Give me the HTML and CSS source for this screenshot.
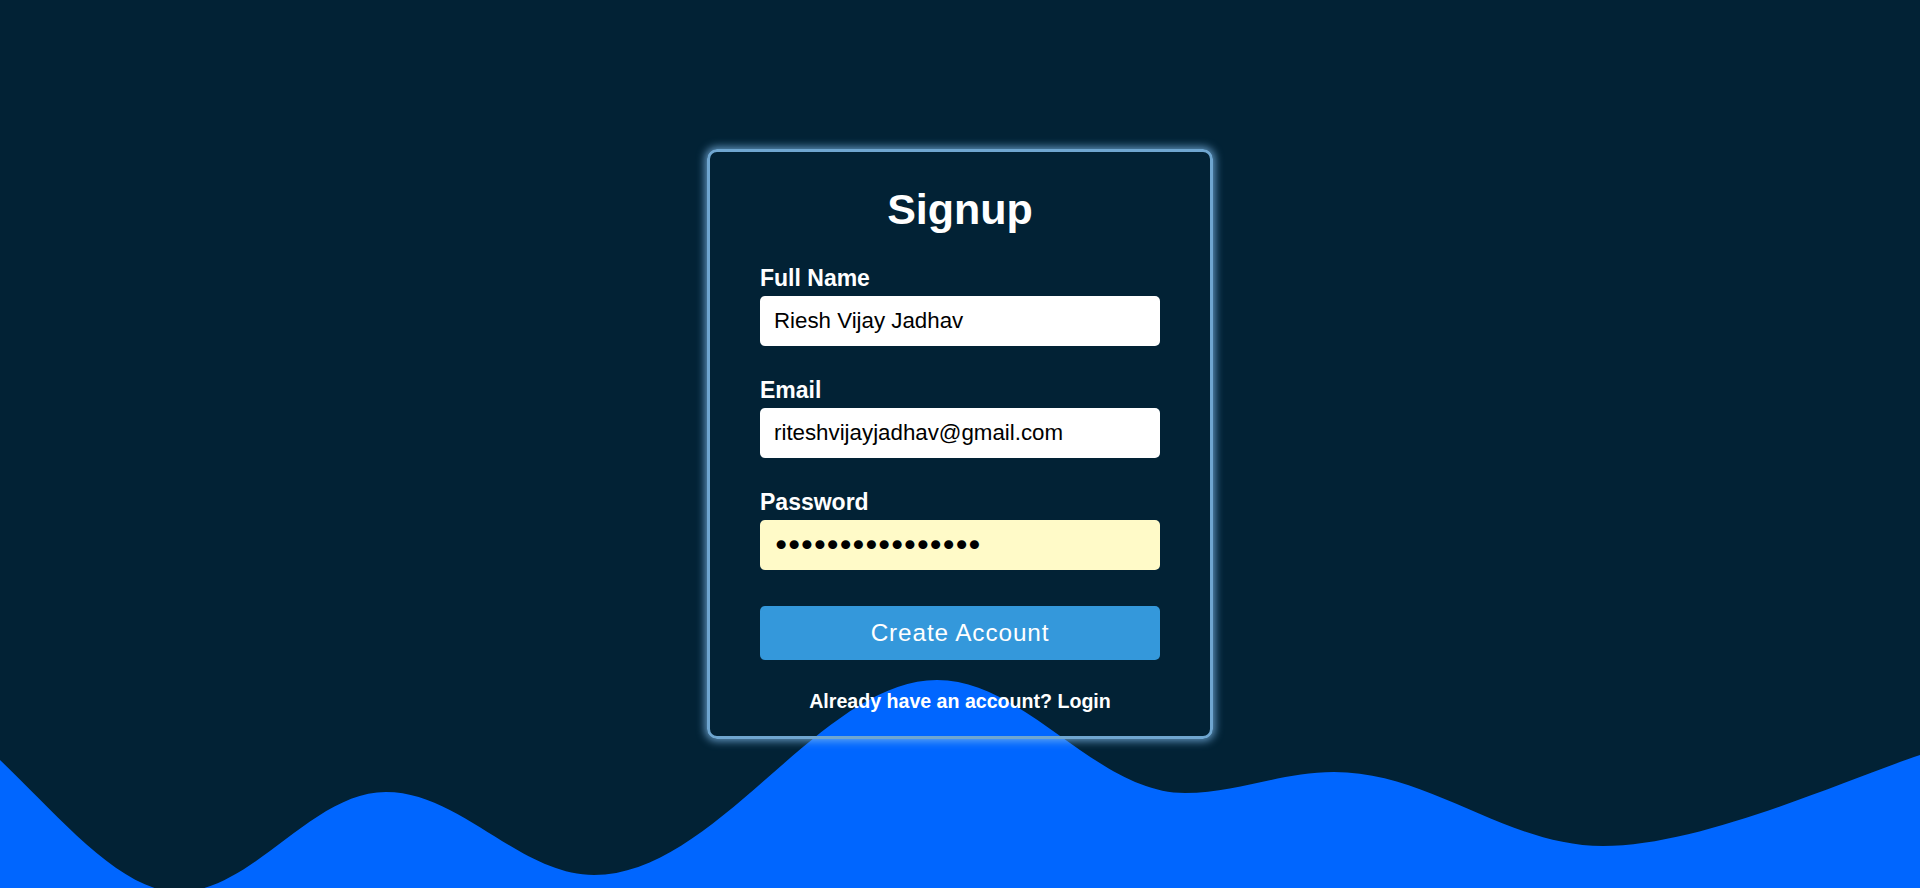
FILE: index.html
```html
<!DOCTYPE html>
<html lang="en">
<head>
<meta charset="utf-8">
<title>Signup</title>
<link rel="stylesheet" href="styles.css">
</head>
<body>
  <svg class="wave" viewBox="0 0 1920 888" preserveAspectRatio="none" aria-hidden="true">
    <path fill="#0066ff" d="M0,760 C55,812 120,892 178,892 C253,892 311,792 386,792 C461,792 519,875 594,875 C717,875 820,680 937,680 C1026,680 1096,793 1185,793 C1239,793 1280,772 1334,772 C1431,772 1506,846 1603,846 C1700,846 1840,782 1920,755 L1920,888 L0,888 Z"/>
  </svg>
  <main class="card">
    <h2 class="title">Signup</h2>
    <form class="form">
      <div class="group">
        <label class="label" for="name">Full Name</label>
        <input class="field" id="name" type="text" value="Riesh Vijay Jadhav">
      </div>
      <div class="group">
        <label class="label" for="email">Email</label>
        <input class="field" id="email" type="email" value="riteshvijayjadhav@gmail.com">
      </div>
      <div class="group">
        <label class="label" for="password">Password</label>
        <input class="field field-autofill" id="password" type="password" value="ritesh@123456789">
      </div>
      <button class="btn" type="button">Create Account</button>
    </form>
    <p class="footer">Already have an account? <a class="link" href="#">Login</a></p>
  </main>
</body>
</html>
```
FILE: styles.css
```css
* { box-sizing: border-box; }

html, body {
  margin: 0;
  height: 100%;
}

body {
  background: #022235;
  font-family: "Liberation Sans", Arial, sans-serif;
  color: #ffffff;
  display: flex;
  align-items: center;
  justify-content: center;
  overflow: hidden;
  position: relative;
}

.wave {
  position: absolute;
  left: 0;
  bottom: 0;
  width: 100%;
  height: 100%;
  z-index: 0;
}

.card {
  position: relative;
  z-index: 1;
  width: 506px;
  height: 590px;
  padding: 33px 50px 23px;
  border: 3px solid #6fa6d0;
  border-radius: 10px;
  background: transparent;
  box-shadow: 0 0 9px 2px rgba(130, 190, 240, 0.75);
  display: flex;
  flex-direction: column;
}

.title {
  margin: 0 0 32px;
  font-size: 43px;
  line-height: 48px;
  font-weight: 700;
  text-align: center;
}

.form {
  display: flex;
  flex-direction: column;
}

.group {
  display: flex;
  flex-direction: column;
  margin-bottom: 31px;
}

.label {
  font-size: 23px;
  line-height: 26px;
  font-weight: 700;
  margin-bottom: 5px;
}

.field {
  height: 50px;
  width: 100%;
  border: none;
  border-radius: 5px;
  padding: 0 14px;
  background: #ffffff;
  color: #000000;
  font-family: "Liberation Sans", Arial, sans-serif;
  font-size: 22.3px;
  outline: none;
}

.field-autofill {
  background: #fffac8;
  font-family: "DejaVu Sans", sans-serif;
  font-size: 31px;
  letter-spacing: -5.4px;
  padding-left: 12px;
}

.btn {
  margin-top: 5px;
  height: 54px;
  width: 100%;
  border: none;
  border-radius: 5px;
  background: #3498db;
  color: #ffffff;
  font-family: "Liberation Sans", Arial, sans-serif;
  font-size: 24.3px;
  letter-spacing: 0.9px;
  cursor: pointer;
}

.footer {
  margin: 30px 0 0;
  font-size: 19.6px;
  line-height: 23px;
  font-weight: 700;
  text-align: center;
}

.link {
  color: #ffffff;
  text-decoration: none;
}
```
